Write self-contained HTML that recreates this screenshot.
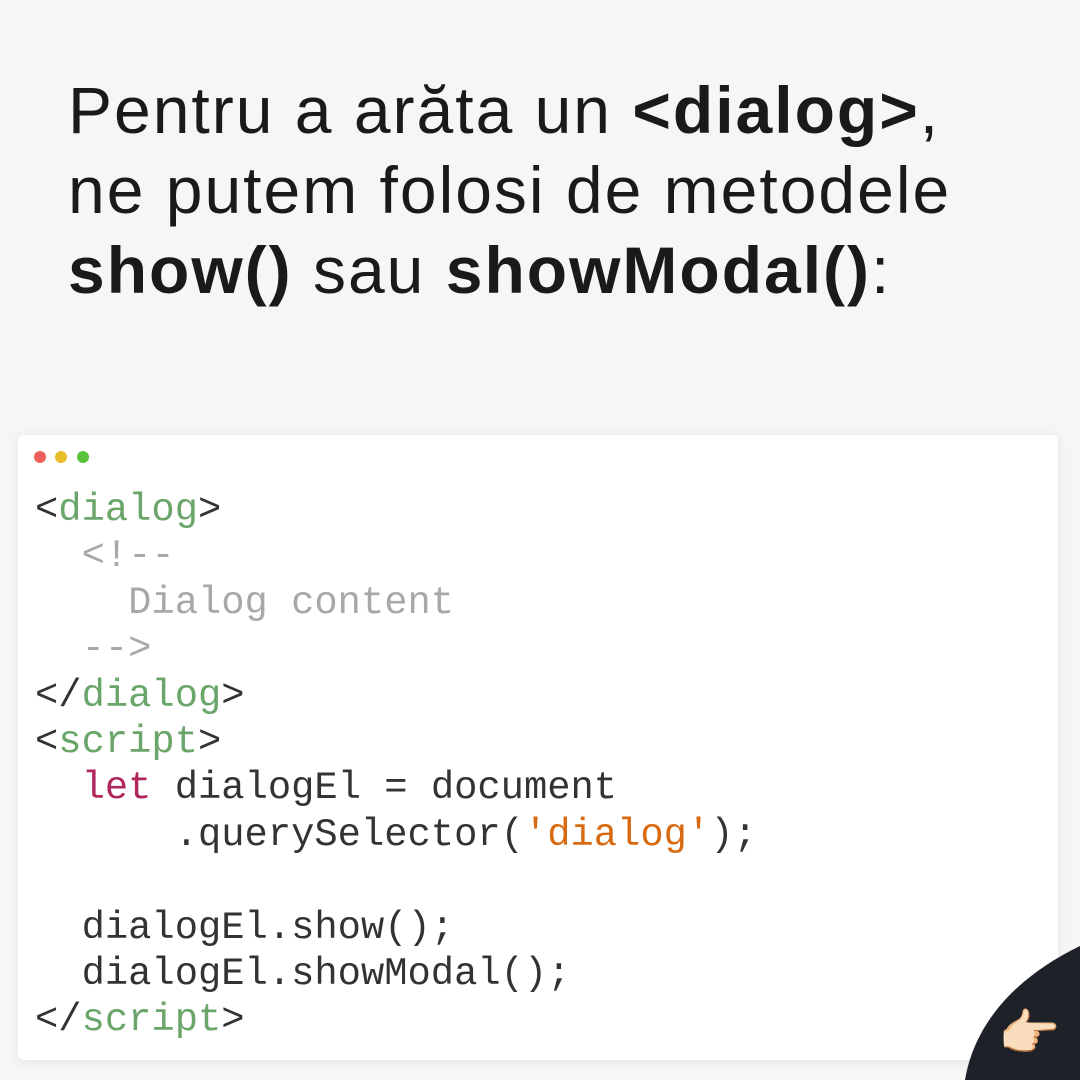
<!DOCTYPE html>
<html><head><meta charset="utf-8"><style>
html,body{margin:0;padding:0;width:1080px;height:1080px;overflow:hidden}
body{background:#f6f6f6;position:relative;font-family:"Liberation Sans",sans-serif}
h1{position:absolute;left:68px;top:70px;margin:0;font-weight:400;font-size:66px;line-height:80px;color:#1a1a1a;letter-spacing:2px;white-space:nowrap}
h1 b{font-weight:700}
.card{position:absolute;left:18px;top:435px;width:1040px;height:625px;background:#fff;border-radius:6px;box-shadow:0 2px 12px rgba(0,0,0,0.08)}
.dot{position:absolute;top:451px;width:12px;height:12px;border-radius:50%}
pre{position:absolute;left:35px;top:487px;margin:0;font-family:"Liberation Mono","DejaVu Sans Mono",monospace;font-size:38.8px;line-height:46.4px;color:#333}
.g{color:#6aa56a}.c{color:#a8a8a8}.k{color:#b0275e}.s{color:#d86b12}
svg.blob{position:absolute;left:0;top:0}
.hand{position:absolute;left:998px;top:1008px;font-size:50px;line-height:1}
</style></head><body>
<h1>Pentru a arăta un <b>&lt;dialog&gt;</b>,<br>ne putem folosi de metodele<br><b>show()</b> sau <b>showModal()</b>:</h1>
<div class="card"></div>
<div class="dot" style="left:34px;background:#f0605a"></div>
<div class="dot" style="left:55px;background:#e8bd2c"></div>
<div class="dot" style="left:77px;background:#5cc23e"></div>
<pre>&lt;<span class="g">dialog</span>&gt;
  <span class="c">&lt;!--</span>
<span class="c">    Dialog content</span>
<span class="c">  --&gt;</span>
&lt;/<span class="g">dialog</span>&gt;
&lt;<span class="g">script</span>&gt;
  <span class="k">let</span> dialogEl = document
      .querySelector(<span class="s">'dialog'</span>);

  dialogEl.show();
  dialogEl.showModal();
&lt;/<span class="g">script</span>&gt;</pre>
<svg class="blob" width="1080" height="1080"><path d="M1080 946 C1020 975 975 1020 965 1080 L1080 1080 Z" fill="#1f2129"/></svg>
<div class="hand">👉🏻</div>
</body></html>
